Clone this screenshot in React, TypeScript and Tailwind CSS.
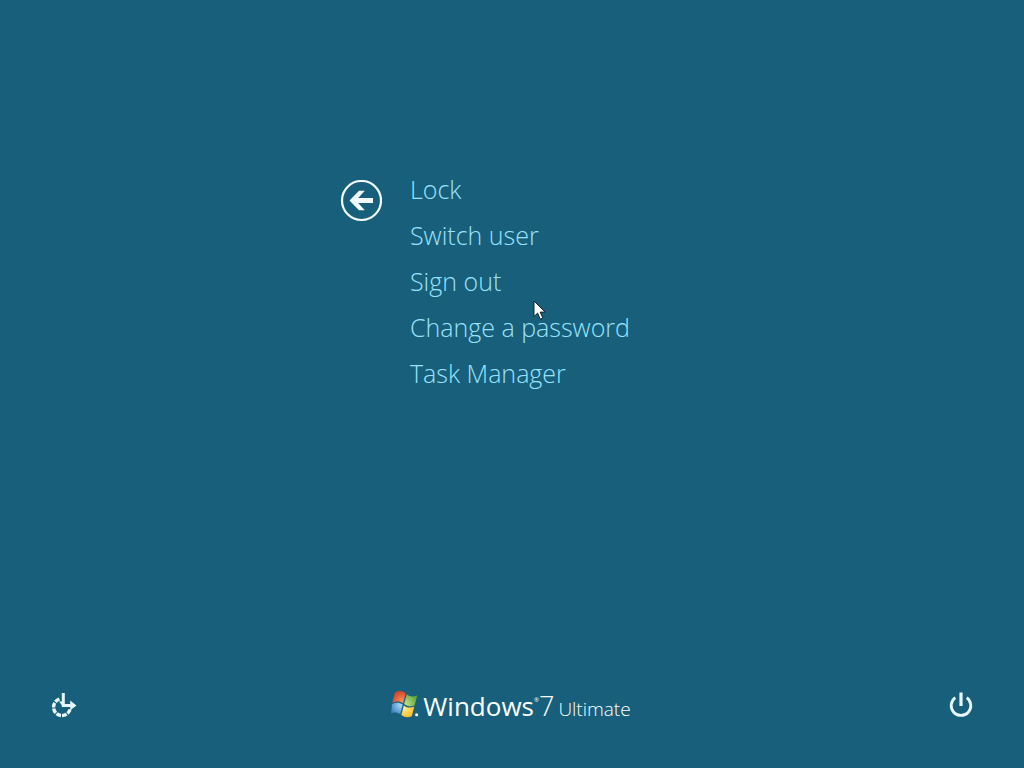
const actions = ['Lock', 'Switch user', 'Sign out', 'Change a password', 'Task Manager'];

function BackIcon() {
  return (
    <svg viewBox="0 0 42 42" className="size-[42px]" aria-hidden="true">
      <circle cx="21.5" cy="20.5" r="19.5" fill="none" stroke="#f2fbff" strokeWidth="2.2" />
      <path d="M9.5 20.5 19 10.7h5.8L18.2 18H33v5H18.2l6.6 7.3H19z" fill="#f2fbff" />
    </svg>
  );
}

function EaseOfAccessIcon() {
  return (
    <svg viewBox="0 0 28 28" className="size-7" fill="none" stroke="#e6f8fd" aria-hidden="true">
      <path d="M9.4 8.2a8.4 8.4 0 1 0 10.8 9.6" strokeWidth="3.4" strokeDasharray="4.8 1.1" />
      <path d="M13.3 2v12.4H22" strokeWidth="3" />
      <path d="M9 10.4h4.3v5.6zM20.2 9.6l6.3 4.8-6.3 4.8z" fill="#e6f8fd" stroke="none" />
    </svg>
  );
}

function PowerIcon() {
  return (
    <svg viewBox="0 0 26 28" className="h-7 w-[26px]" fill="none" stroke="#e6f8fd" aria-hidden="true">
      <path d="M7.3 6.7a9.8 9.8 0 1 0 11.4 0" strokeWidth="2.8" />
      <path d="M13 1.5V15" strokeWidth="3.2" />
    </svg>
  );
}

function WindowsFlag() {
  return (
    <svg viewBox="0 0 26 26" className="size-7" aria-hidden="true">
      <defs>
        <radialGradient id="red" cx="0.8" cy="0.9" r="1">
          <stop offset="0" stopColor="#f59a62" />
          <stop offset="1" stopColor="#d33a22" />
        </radialGradient>
        <radialGradient id="green" cx="0.1" cy="0.8" r="1">
          <stop offset="0" stopColor="#c5df83" />
          <stop offset="1" stopColor="#57a63d" />
        </radialGradient>
        <radialGradient id="blue" cx="0.8" cy="0.2" r="1">
          <stop offset="0" stopColor="#a9d8f2" />
          <stop offset="1" stopColor="#2e78bd" />
        </radialGradient>
        <radialGradient id="yellow" cx="0.2" cy="0.2" r="1">
          <stop offset="0" stopColor="#fff08a" />
          <stop offset="1" stopColor="#f7b51d" />
        </radialGradient>
      </defs>
      <path d="M3.6 2.4C7 .2 10.8.6 13.6 3L11.2 12.4C8.2 10.4 4.8 10.2 1.2 12z" fill="url(#red)" />
      <path d="M14.6 3.9c3.2 2.4 6.4 2.7 9.8.9L22 14.2c-3.4 1.7-6.7 1.3-9.8-1.1z" fill="url(#green)" />
      <path d="M.9 13.2c3.5-1.9 6.9-1.7 10 .3L8.6 22.6c-3-2-6.3-2.1-8.6-.4z" fill="url(#blue)" />
      <path d="M11.9 14.3c3.1 2.3 6.4 2.7 9.8 1l-2.4 9c-3.3 1.6-6.6 1.3-9.7-1.1z" fill="url(#yellow)" />
      <circle cx="23.8" cy="23" r="1.4" fill="#fff" />
    </svg>
  );
}

export default function App() {
  return (
    <div className="relative flex min-h-screen flex-col bg-[#175f7b] font-['Open_Sans','Noto_Sans',sans-serif] text-white">
      <main className="flex flex-1 items-start gap-7 pt-[166px] pl-[33.2%]">
        <button type="button" aria-label="Back" className="mt-[14px] shrink-0">
          <BackIcon />
        </button>
        <ul>
          {actions.map((label) => (
            <li key={label}>
              <button type="button" className="block h-[46px] text-left text-[25px] leading-[46px] font-light whitespace-nowrap text-[#9be3fb]">
                {label}
              </button>
            </li>
          ))}
        </ul>
      </main>
      <footer className="grid grid-cols-[1fr_auto_1fr] items-center px-[50px] pb-[41px]">
        <button type="button" aria-label="Ease of access" className="justify-self-start">
          <EaseOfAccessIcon />
        </button>
        <div className="flex items-baseline pt-1.5 pr-0.5 leading-9 whitespace-nowrap">
          <span className="mt-0.5 mr-1 self-start">
            <WindowsFlag />
          </span>
          <span className="text-[26px] font-normal">Windows</span>
          <span className="self-start text-[6px] leading-6">®</span>
          <span className="text-[27px] font-light">7</span>
          <span className="ml-1 text-[19px] font-light">Ultimate</span>
        </div>
        <button type="button" aria-label="Shut down" className="justify-self-end">
          <PowerIcon />
        </button>
      </footer>
      <svg viewBox="0 0 14 21" className="pointer-events-none absolute top-[300px] left-[533px] h-[21px] w-3.5" aria-hidden="true">
        <path d="M1 1v15.5l3.6-3.4 2.6 6 2.6-1.1-2.6-5.9h5z" fill="#fff" stroke="#10242e" strokeWidth="1" />
      </svg>
    </div>
  );
}
